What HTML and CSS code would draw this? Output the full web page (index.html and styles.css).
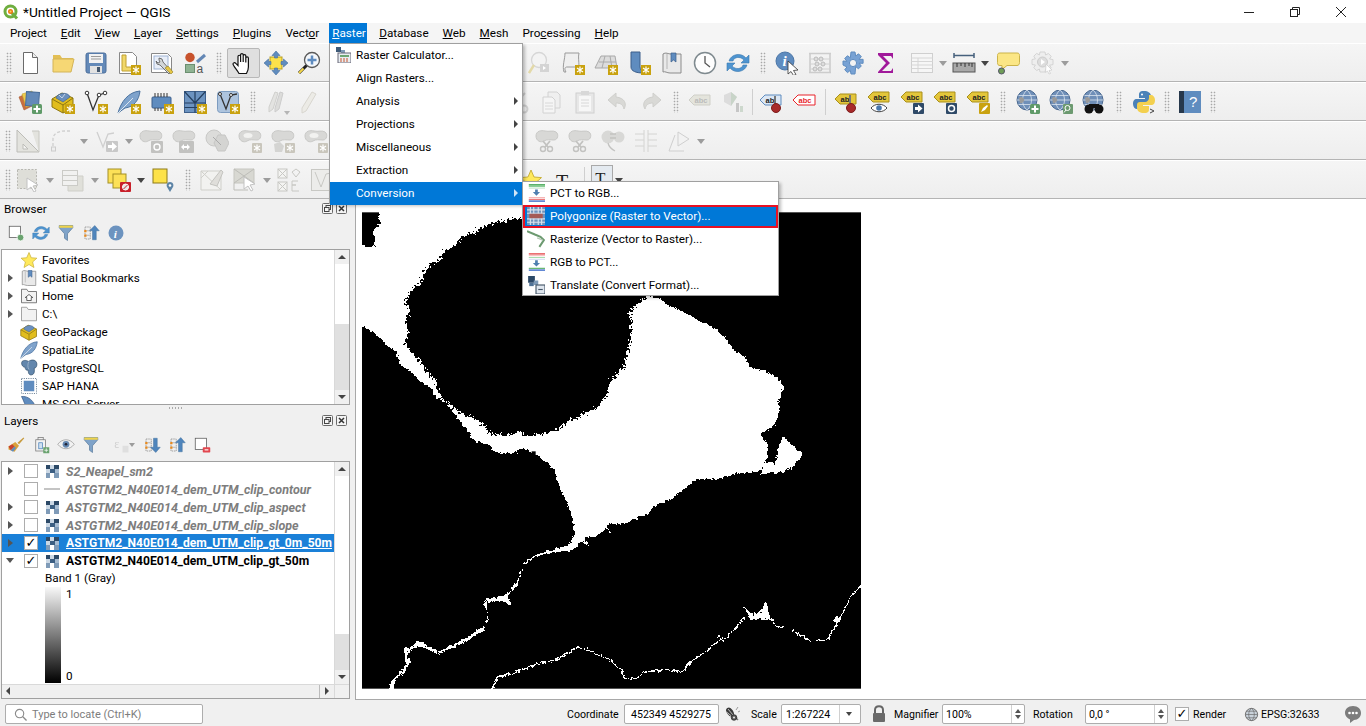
FILE: index.html
```html
<!DOCTYPE html>
<html lang="en">
<head>
<meta charset="utf-8">
<title>*Untitled Project — QGIS</title>
<link rel="stylesheet" href="styles.css">
</head>
<body>
<svg class="defs" aria-hidden="true">
  <symbol id="star" viewBox="0 0 24 24"><path d="M12 2l3 7 7.500 .6-5.700 5 1.800 7.400-6.600-4-6.600 4 1.800-7.400-5.700-5 7.500-.6z" fill="#ffe95c" stroke="#c9b23c"/></symbol>
  <g id="bd"><rect x="14" y="14" width="10" height="10" fill="#c9a20f"/><path d="M19 15.500v7M16 17l6 4M22 17l-6 4" stroke="#fff" stroke-width="1.200"/></g>
  <g id="bg"><rect x="14" y="14" width="10" height="10" rx="1" fill="#c9c6bc"/><path d="M19 15.500v7M16 17l6 4M22 17l-6 4" stroke="#fff" stroke-width="1.200"/></g>
  <g id="plus"><rect x="14" y="14" width="10" height="10" rx="1.500" fill="#5f9a68"/><path d="M19 15.500v7M15.500 19h7" stroke="#fff" stroke-width="2"/></g>
  <symbol id="new" viewBox="0 0 24 24"><path d="M5.500 1.500h9l5 5v16h-14z" fill="#fff" stroke="#6a6a6a"/><path d="M14.500 1.500v5h5" fill="#eee" stroke="#6a6a6a"/></symbol>
  <symbol id="open" viewBox="0 0 24 24"><path d="M2 4h7l2 3h11v3H2z" fill="#e3bf55"/><path d="M2 21V8h21l-3 13z" fill="#f6d774" stroke="#d3b458"/></symbol>
  <symbol id="save" viewBox="0 0 24 24"><rect x="2" y="2" width="20" height="20" rx="2" fill="#6389b8" stroke="#4c6f9b"/><rect x="5" y="3" width="14" height="9" fill="#f2f2f2"/><path d="M7 5.500h10M7 8h10" stroke="#9a9a9a"/><rect x="6" y="15" width="12" height="7" fill="#e2e2e2"/><rect x="13" y="16" width="3" height="5" fill="#45586e"/></symbol>
  <symbol id="saveas" viewBox="0 0 24 24"><path d="M2.500 1.500h13l4 4v17h-17z" fill="#fff" stroke="#888"/><path d="M5 4h4v12h9v4H5z" fill="#f1d86a" stroke="#c0a030"/><use href="#bd"/></symbol>
  <symbol id="props" viewBox="0 0 24 24"><path d="M1.500 2.500h16l4 4v15h-20z" fill="#fff" stroke="#888"/><rect x="4" y="5" width="14" height="13" fill="#e8eef8" stroke="#9fb3d3"/><path d="M9 7l3 1 1 3 8 9-2 3-9-9-3-1-1-3 2 2 2-1-1-2z" fill="#d2d6d8" stroke="#555" stroke-width=".8"/><path d="M15 17l6 6 2-2-5-6z" fill="#e6c746" stroke="#8f7a20" stroke-width=".6"/></symbol>
  <symbol id="pan" viewBox="0 0 24 24"><path d="M8 22.500C6 19 2 14.500 2 13c0-1.400 1.700-1.800 2.800-.6L7 14.500V5.500c0-1.700 2.600-1.700 2.600 0V11 3.800c0-1.700 2.600-1.700 2.600 0V11 4.800c0-1.700 2.600-1.700 2.600 0V11.500 7.200c0-1.700 2.600-1.700 2.600 0V16c0 3-1 4.500-2 6.500z" fill="#fff" stroke="#111" stroke-width="1.200"/></symbol>
  <symbol id="pansel" viewBox="0 0 24 24"><rect x="6" y="6" width="12" height="12" fill="#fde24a" stroke="#b69d22"/><path d="M12 0l4 4.500h-2.500V7h-3V4.500H8zM12 24l4-4.500h-2.500V17h-3v2.500H8zM0 12l4.500-4v2.500H7v3H4.500V16zM24 12l-4.500-4v2.500H17v3h2.500V16z" fill="#5f8cbf" stroke="#476f9d" stroke-width=".6"/></symbol>
  <symbol id="zoomin" viewBox="0 0 24 24"><circle cx="15" cy="9" r="7.500" fill="#f4f7fb" stroke="#5a5a5a" stroke-width="1.300"/><path d="M15 4.500v9M10.500 9h9" stroke="#5f8cbf" stroke-width="2.500"/><path d="M9.500 14.500L2 22" stroke="#222" stroke-width="3"/><path d="M6.500 17.500L2 22" stroke="#f4d64a" stroke-width="2.200"/></symbol>
  <symbol id="zoomlast" viewBox="0 0 24 24"><circle cx="11" cy="9" r="7.500" fill="#f3f3f3" stroke="#d6d6d6" stroke-width="1.300"/><path d="M6 14l-5 8" stroke="#e3d9a8" stroke-width="2.500"/><path d="M12 13h9v8h-9z" fill="#d4d4d4"/><path d="M15 15l3 2-3 2z" fill="#fff"/></symbol>
  <symbol id="newmap" viewBox="0 0 24 24"><path d="M4 2h14c-1 4 0 8 0 14H6c-2 0-3 2-1 5H3c-2-6 1-13 1-19z" fill="#efefef" stroke="#9a9a9a"/><use href="#bd"/></symbol>
  <symbol id="mapth" viewBox="0 0 24 24"><path d="M7 5h14l2 12H1z" fill="#dcdcdc" stroke="#a8a8a8"/><path d="M5 11h17M11 5l-3 12M16 5l2 12" stroke="#aaa"/><use href="#bd"/></symbol>
  <symbol id="bmnew" viewBox="0 0 24 24"><path d="M4 1h9v15c0 2 2 4 3 6-7 0-12-2-12-6z" fill="#5f8cbf" stroke="#3d5f8b"/><use href="#bd"/></symbol>
  <symbol id="bmk" viewBox="0 0 24 24"><path d="M3 3c3-2 5 0 8 0h10v19H10c-3 0-5-2-7-1z" fill="#e9e9e9" stroke="#8b8b8b"/><path d="M7 3v15" stroke="#b5b5b5"/><path d="M11 2h5v9l-2.500-2-2.500 2z" fill="#5f8cbf" stroke="#3d5f8b" stroke-width=".7"/></symbol>
  <symbol id="clock" viewBox="0 0 24 24"><circle cx="12" cy="12" r="10.500" fill="#fdfdfd" stroke="#7f8a8f" stroke-width="1.500"/><path d="M12 5v7l5 4" fill="none" stroke="#555" stroke-width="1.300"/></symbol>
  <symbol id="refresh" viewBox="0 0 24 24"><path d="M3 10C5 3 15 1 20 7l3-3v8h-8l3-3C14 5 8 6 7 10z" fill="#4e94d0" stroke="#3a78ae" stroke-width=".6"/><path d="M21 14C19 21 9 23 4 17l-3 3v-8h8l-3 3c4 4 10 3 11-1z" fill="#4e94d0" stroke="#3a78ae" stroke-width=".6"/></symbol>
  <symbol id="abacus" viewBox="0 0 24 24"><path d="M2 2v20M22 2v20M1 2.500h22M1 21.500h22" stroke="#ccc" stroke-width="1.600" fill="none"/><path d="M2 8h20M2 13h20M2 18h20" stroke="#d2d2d2"/><circle cx="8" cy="8" r="2" fill="#ddd" stroke="#bbb"/><circle cx="13" cy="8" r="2" fill="#ddd" stroke="#bbb"/><circle cx="9" cy="13" r="2" fill="#ddd" stroke="#bbb"/><circle cx="15" cy="13" r="2" fill="#ddd" stroke="#bbb"/><circle cx="7" cy="18" r="2" fill="#ddd" stroke="#bbb"/><circle cx="12" cy="18" r="2" fill="#ddd" stroke="#bbb"/></symbol>
  <symbol id="gear" viewBox="0 0 24 24"><path d="M10 1h4l.7 4 2.800-2.200 2.800 2.800-2.200 2.800 4-.1v4l-4-.1 2.200 2.800-2.800 2.800-2.800-2.200L14 23h-4l-.7-3.600-2.800 2.200-2.800-2.800 2.200-2.800L2 14v-4l3.900.3L3.700 7.500l2.800-2.800 2.800 2.200z" fill="#78a2d4" stroke="#5f8cbf"/><circle cx="12" cy="12" r="3.600" fill="#f3f3f3" stroke="#5f8cbf"/></symbol>
  <symbol id="sigma" viewBox="0 0 24 24"><path d="M4 2h15v6l-2-3H9l7 7-8 8h9l2-3v5H4v-1l8-9-8-8z" fill="#a0199a"/></symbol>
  <symbol id="table" viewBox="0 0 24 24"><rect x="1.500" y="2.500" width="21" height="19" fill="#f6f6f6" stroke="#cfcfcf"/><path d="M1.500 7h21M1.500 10.500h21M1.500 14h21M1.500 17.500h21M8 7v14" stroke="#d6d6d6"/></symbol>
  <symbol id="ruler" viewBox="0 0 24 24"><path d="M2 4.500h20M2 2v5M22 2v5" stroke="#46607c" stroke-width="1.500" fill="none"/><rect x="1" y="12" width="22" height="9" fill="#a9a9a9" stroke="#555"/><path d="M5 12v4M9 12v3M13 12v4M17 12v3M20 12v4" stroke="#333"/></symbol>
  <symbol id="bubble" viewBox="0 0 24 24"><path d="M4 2h17c2 0 2.500 1 2.500 2.500v7c0 2-1 3-2.500 3H11l-5 4v-4H4c-2 0-2.500-1-2.500-3v-7C1.500 3 2 2 4 2z" fill="#fbe685" stroke="#cbb34a"/><circle cx="5.500" cy="20" r="3" fill="#6f9d58" stroke="#556"/></symbol>
  <symbol id="run" viewBox="0 0 24 24"><path d="M9 1h5l.6 3 2.800-1.500 2.800 2.800-1.600 2.700 3.400.6v5l-3.400.6 1.600 2.700-2.800 2.800-2.800-1.500L14 21H9l-.6-3-2.800 1.500-2.800-2.800 1.600-2.700L1 13.500v-5l3.400-.6-1.600-2.700 2.800-2.800 2.800 1.500z" fill="#eee" stroke="#d4d4d4"/><circle cx="11.500" cy="11" r="5" fill="#ddd" stroke="#ccc"/><path d="M10 8l4 3-4 3z" fill="#fff"/><path d="M15 13l6 6-3 .5 1.500 3-1.500.5-1.500-3-2 1.500z" fill="#fff" stroke="#ccc" stroke-width=".7"/></symbol>
  <symbol id="addlayer" viewBox="0 0 24 24"><path d="M1 7l9-4 6 12-10 5z" fill="#c96f3f" stroke="#a8572d" stroke-width=".6"/><path d="M4 4l10-3 4 13-10 3z" fill="#f0cc4c" stroke="#c5a433" stroke-width=".6"/><rect x="8" y="2" width="13" height="14" fill="#6389b8" stroke="#486d9b" transform="rotate(4 14 9)"/><use href="#plus"/></symbol>
  <symbol id="gpkg" viewBox="0 0 24 24"><path d="M1 9l10-6 11 5v10l-10 5-11-6z" fill="#e1bd1d" stroke="#8d7612"/><path d="M1 9l11 6 10-7M12 15v8" fill="none" stroke="#8d7612"/><path d="M5 8c1-5 12-7 14-1l-7 5z" fill="#6a8fbd" stroke="#3d5f8b" stroke-width=".6"/><path d="M8 5l3 3 3-4" stroke="#c6d4e6" fill="none"/><use href="#bd"/></symbol>
  <symbol id="vnew" viewBox="0 0 24 24"><path d="M3 3l6 17L15 5l6-2" fill="none" stroke="#333" stroke-width="1.300"/><circle cx="3" cy="3" r="1.800" fill="#fff" stroke="#333"/><circle cx="15" cy="5" r="1.800" fill="#fff" stroke="#333"/><circle cx="21" cy="3" r="1.800" fill="#fff" stroke="#333"/><use href="#bd"/></symbol>
  <symbol id="feather" viewBox="0 0 24 24"><path d="M1 23C4 12 11 2 23 1c-1 9-6 16-15 17z" fill="#7fa3cc" stroke="#4c739f"/><path d="M1 23L16 8" stroke="#dce6f0"/><use href="#bd"/></symbol>
  <symbol id="hana" viewBox="0 0 24 24"><rect x="2" y="7" width="19" height="11" rx="1" fill="#5f8cbf" stroke="#3d5f8b"/><path d="M5 3v4M8 3v4M11 3v4M14 3v4M17 3v4M5 18v3M8 18v3M11 18v3" stroke="#333"/><use href="#bd"/></symbol>
  <symbol id="mesh" viewBox="0 0 24 24"><rect x="1.500" y="1.500" width="21" height="21" fill="#6c93c0" stroke="#3d5f8b"/><path d="M1.500 13h21M12 1.500v21M1.500 1.500L12 13M22.500 1.500L12 13M1.500 17.500h21" stroke="#243f5f" stroke-width="1.200" fill="none"/><use href="#bd"/></symbol>
  <symbol id="vtemp" viewBox="0 0 24 24"><rect x="1.500" y="1.500" width="21" height="21" rx="3" fill="#adc4de" stroke="#7d9cc0"/><path d="M4 4l6 15 5-14 6-1" fill="none" stroke="#333" stroke-width="1.300"/><circle cx="4" cy="4" r="1.500" fill="#fff" stroke="#333"/><circle cx="15" cy="5" r="1.500" fill="#fff" stroke="#333"/><use href="#bd"/></symbol>
  <symbol id="pens" viewBox="0 0 24 24"><path d="M3 17L9 2l3 1-5 16-4 3z" fill="#e3e3e1" stroke="#d0d0cd"/><path d="M9 18l5-16 3 1-4 16-4 3z" fill="#dcdcda" stroke="#ccc"/></symbol>
  <symbol id="pen" viewBox="0 0 24 24"><path d="M6 18L16 2l4 2-10 17-4 2z" fill="#ecebe6" stroke="#d8d6cf"/></symbol>
  <symbol id="scis" viewBox="0 0 24 24"><path d="M5 3l8 11M18 3L8 14" stroke="#cfcfcf" stroke-width="2"/><circle cx="6" cy="19" r="3.500" fill="none" stroke="#cfcfcf" stroke-width="2"/><circle cx="17" cy="19" r="3.500" fill="none" stroke="#cfcfcf" stroke-width="2"/></symbol>
  <symbol id="copy" viewBox="0 0 24 24"><path d="M8 2h9l3 3v13H8z" fill="#efefef" stroke="#d2d2d2"/><path d="M3 7h9l3 3v13H3z" fill="#f5f5f5" stroke="#d2d2d2"/><path d="M5 13h8M5 16h8M5 19h8" stroke="#d8d8d8"/></symbol>
  <symbol id="paste" viewBox="0 0 24 24"><rect x="3" y="3" width="18" height="20" fill="#e7e7e7" stroke="#d0d0d0"/><rect x="8" y="1" width="8" height="4" fill="#d8d8d8"/><rect x="6" y="6" width="12" height="15" fill="#f7f7f7"/><path d="M8 10h8M8 13h8M8 16h8" stroke="#d8d8d8"/></symbol>
  <symbol id="undo" viewBox="0 0 24 24"><path d="M10 3L2 10l8 7v-4c5 0 7 2 8 6 3-5 1-11-8-12z" fill="#d9d9d6" stroke="#cfcfcc"/></symbol>
  <symbol id="redo" viewBox="0 0 24 24"><path d="M14 3l8 7-8 7v-4c-5 0-7 2-8 6-3-5-1-11 8-12z" fill="#d9d9d6" stroke="#cfcfcc"/></symbol>
  <symbol id="labbar" viewBox="0 0 24 24"><path d="M3 5l7-3 6 5-6 9-7-4z" fill="#dcdcdc"/><path d="M10 2l6 5-6 9z" fill="#c8d4c8"/><rect x="15" y="13" width="3" height="9" fill="#c6c6c6"/><rect x="19" y="16" width="3" height="6" fill="#cdd8cd"/></symbol>
  <g id="globe"><circle cx="11" cy="10" r="10" fill="#6f8fb8" stroke="#4c6a91"/><path d="M1 10h20M2.500 5.500h17M2.500 14.500h17M11 0c-6 5-6 15 0 20M11 0c6 5 6 15 0 20" stroke="#dce5ef" fill="none" stroke-width=".8"/><path d="M3 8c2-2 4-1 5 1s-2 5-4 4z" fill="#9a9a9a"/></g>
  <symbol id="gadd" viewBox="0 0 24 24"><use href="#globe"/><use href="#plus"/></symbol>
  <symbol id="gfind" viewBox="0 0 24 24"><use href="#globe"/><rect x="14" y="14" width="10" height="10" rx="1" fill="#6c9a70"/><circle cx="18.500" cy="18" r="2.500" fill="none" stroke="#fff"/><path d="M17 20l-2 2.500" stroke="#fff"/></symbol>
  <symbol id="gbin" viewBox="0 0 24 24"><use href="#globe"/><circle cx="7" cy="19" r="4.500" fill="#111"/><circle cx="17" cy="19" r="4.500" fill="#111"/><path d="M7 14h10v4H7z" fill="#111"/></symbol>
  <symbol id="py" viewBox="0 0 24 24"><path d="M12 1c-5 0-5 2-5 5v2h6v1H5c-3 0-4 2-4 5s2 5 4 5h2v-3c0-2 2-4 4-4h5c2 0 3-1 3-3V6c0-3-3-5-7-5z" fill="#4b82b8"/><path d="M12 23c5 0 5-2 5-5v-2h-6v-1h8c3 0 4-2 4-5s-2-5-4-5h-2v3c0 2-2 4-4 4H8c-2 0-3 1-3 3v3c0 3 3 5 7 5z" fill="#f3d04f"/><circle cx="10" cy="4.500" r="1" fill="#fff"/><path d="M18 19l4 2-4 2" fill="none" stroke="#444"/></symbol>
  <symbol id="ruleg" viewBox="0 0 24 24"><path d="M1 1v22h22z" fill="#e3e3de" stroke="#bdbdb8"/><path d="M7 15v5h5z" fill="#f4f4f2" stroke="#bdbdb8"/><path d="M16 2h7v21" fill="#e3e3de" stroke="#c8c8c2"/></symbol>
  <symbol id="curve" viewBox="0 0 24 24"><path d="M3 22V10C3 5 8 2 15 2h6" fill="none" stroke="#cfcfcf" stroke-width="1.300" stroke-dasharray="3 2"/><rect x="1.500" y="18" width="4" height="4" fill="#eee" stroke="#ccc"/></symbol>
  <symbol id="vmove" viewBox="0 0 24 24"><path d="M2 3l6 15 5-13 6-1" fill="none" stroke="#cfcfcf" stroke-width="1.300"/><rect x="11" y="12" width="12" height="11" rx="1" fill="#c8c8c8"/><path d="M13 16h4v-3l5 4.500-5 4.500v-3h-4z" fill="#fff"/></symbol>
  <g id="blob"><path d="M1 7C1 2 6 1 10 2c4 1 8-1 11 1s2 8-2 8-7-1-10 1-8 0-8-5z" fill="#d8d8d6" stroke="#c9c9c7"/></g>
  <symbol id="brot" viewBox="0 0 24 24"><use href="#blob"/><rect x="12" y="12" width="12" height="12" rx="1" fill="#c2c2c0"/><circle cx="18" cy="18" r="3" fill="none" stroke="#fff" stroke-width="1.400"/></symbol>
  <symbol id="bsize" viewBox="0 0 24 24"><use href="#blob"/><rect x="7" y="12" width="15" height="12" rx="1" fill="#c2c2c0"/><path d="M9 18l3-3v2h3v-2l3 3-3 3v-2h-3v2z" fill="#fff"/></symbol>
  <symbol id="bhex" viewBox="0 0 24 24"><circle cx="9" cy="9" r="8" fill="#dcdcda" stroke="#c9c9c7"/><path d="M13 6h7l4 8-4 8h-7l-4-8z" fill="#d4d4d2" stroke="#c6c6c4"/><path d="M8 8l8 8" stroke="#aaa"/></symbol>
  <symbol id="brng" viewBox="0 0 24 24"><use href="#blob"/><ellipse cx="10" cy="6.500" rx="4.500" ry="2.500" fill="#f2f2f0"/><use href="#bg"/></symbol>
  <symbol id="bpart" viewBox="0 0 24 24"><use href="#blob"/><path d="M3 15l6-2 4 4-2 6H4z" fill="#d4d4d2"/><use href="#bg"/></symbol>
  <symbol id="bscis" viewBox="0 0 24 24"><use href="#blob"/><path d="M8 12l5 6M15 12l-5 6" stroke="#c2c2c0" stroke-width="1.800"/><circle cx="8" cy="20" r="2.500" fill="none" stroke="#c2c2c0" stroke-width="1.400"/><circle cx="15" cy="20" r="2.500" fill="none" stroke="#c2c2c0" stroke-width="1.400"/></symbol>
  <symbol id="bmerge" viewBox="0 0 24 24"><circle cx="7" cy="8" r="6.500" fill="#d8d8d6"/><circle cx="18" cy="8" r="5.500" fill="#d8d8d6"/><path d="M9 5h6M9 9h6M7 14c1 4 3 6 7 8" stroke="#c2c2c0" fill="none" stroke-width="1.300"/></symbol>
  <symbol id="offs" viewBox="0 0 24 24"><path d="M1 5h9M14 5h9M1 11h9M14 11h9M1 17h9M14 17h9M10 1v22M14 1v22" stroke="#d4d4d2"/></symbol>
  <symbol id="rotp" viewBox="0 0 24 24"><path d="M11 3l11 7-11 7zM8 6L2 22h15" fill="#f2f2f2" stroke="#cfcfcf"/></symbol>
  <symbol id="sel" viewBox="0 0 24 24"><rect x="1.500" y="1.500" width="19" height="19" fill="#deded8" stroke="#b8b8b2" stroke-dasharray="2 1.500"/><path d="M11 10l11 7-5 1 3 5-2 1-3-5-4 3z" fill="#fff" stroke="#c2c2c2"/></symbol>
  <symbol id="attrs" viewBox="0 0 24 24"><path d="M17 8h5v15H7v-5" fill="#e0e0da" stroke="#cfcfc9"/><rect x="1.500" y="2.500" width="15" height="15" fill="#f1f1f0" stroke="#cbcbc7"/><path d="M1.500 7.500h15M1.500 12.500h15" stroke="#cbcbc7"/></symbol>
  <symbol id="desel" viewBox="0 0 24 24"><rect x="1" y="1" width="13" height="14" fill="#fce157" stroke="#a39026"/><rect x="6" y="6" width="13" height="14" fill="#fce157" stroke="#a39026"/><rect x="13" y="14" width="11" height="10" rx="1" fill="#c8202a"/><circle cx="18.500" cy="19" r="3" fill="#e6e6e6" stroke="#fff"/><path d="M16.500 21l4-4" stroke="#c8202a"/></symbol>
  <symbol id="selpin" viewBox="0 0 24 24"><rect x="1" y="1" width="14" height="14" fill="#fde24a" stroke="#8d7a18"/><path d="M18 14c-3 0-4 3-3 5l3 5 3-5c1-2 0-5-3-5z" fill="#5d84a6"/><circle cx="18" cy="17.500" r="1.300" fill="#fff"/></symbol>
  <symbol id="e1" viewBox="0 0 24 24"><path d="M1 3h20v19H1z" fill="#f2f2f0" stroke="#cfcfca"/><path d="M1 3l20 19M8 3L1 10" stroke="#cfcfca"/><path d="M17 18L23 4l-2-2L10 16z" fill="#dfdeda" stroke="#c4c4c0"/></symbol>
  <symbol id="e2" viewBox="0 0 24 24"><path d="M1 1h20v14H1z" fill="#d8d8d2" stroke="#c6c6c0"/><path d="M1 1l20 14M21 1L1 15M1 15v7h14" stroke="#bdbdb8" fill="none"/><path d="M11 9l11 7-5 1 3 5-2 1-3-5-4 3z" fill="#fff" stroke="#c2c2c2"/></symbol>
  <symbol id="e3" viewBox="0 0 24 24"><rect x="1" y="1" width="9" height="9" fill="#f4f4f2" stroke="#c8c8c4"/><rect x="1" y="14" width="9" height="9" fill="#f4f4f2" stroke="#c8c8c4"/><path d="M1 1l9 9M10 1l-9 9M1 14l9 9M10 14l-9 9M15 4l4-3 4 3-4 5zM21 13h-6v4h4-4v6h7" fill="none" stroke="#c8c8c4"/></symbol>
  <symbol id="e4" viewBox="0 0 24 24"><rect x="1.500" y="1.500" width="21" height="21" fill="#ececea" stroke="#c8c8c4"/><path d="M5 4l6 15 5-13 5-1" fill="none" stroke="#c8c8c4"/></symbol>
  <symbol id="addnew" viewBox="0 0 24 24"><rect x="3" y="3" width="15" height="15" fill="#fff" stroke="#555"/><circle cx="18" cy="18" r="4.500" fill="#6aa36f" stroke="#fff"/></symbol>
  <symbol id="funnel" viewBox="0 0 24 24"><path d="M3 2h18v3l-7 8v9l-4-3v-6L3 5z" fill="#7fa3c9" stroke="#5f7f9f"/><rect x="3" y="2" width="18" height="3" fill="#f0d34a"/></symbol>
  <symbol id="collup" viewBox="0 0 24 24"><path d="M4 4h7v16H4zM4 9h7M4 15h7" fill="none" stroke="#8a8a8a" stroke-dasharray="2 1"/><rect x="3" y="8" width="3" height="3" fill="#e98a1e"/><rect x="3" y="14" width="3" height="3" fill="#e98a1e"/><path d="M17 2l6 7h-4v12h-5V9h-4z" fill="#4f85bc" stroke="#3d6b99" stroke-width=".6"/></symbol>
  <symbol id="colldn" viewBox="0 0 24 24"><path d="M4 4h7v16H4zM4 9h7M4 15h7" fill="none" stroke="#8a8a8a" stroke-dasharray="2 1"/><rect x="3" y="8" width="3" height="3" fill="#e98a1e"/><rect x="3" y="14" width="3" height="3" fill="#e98a1e"/><path d="M17 22l6-7h-4V3h-5v12h-4z" fill="#4f85bc" stroke="#3d6b99" stroke-width=".6"/></symbol>
  <symbol id="brush" viewBox="0 0 24 24"><path d="M14 9l8-7 1 1-7 8z" fill="#c79a3c"/><path d="M2 14l9-6 5 5-6 8-8-3z" fill="#d9a03a"/><path d="M2 14l5-3 3 3-5 5z" fill="#c8422d"/><path d="M5 19l5-5 2 2-4 5z" fill="#5f8cbf"/></symbol>
  <symbol id="addgrp" viewBox="0 0 24 24"><rect x="8" y="2" width="7" height="4" fill="none" stroke="#777"/><rect x="5" y="5" width="13" height="15" fill="#f2f2f2" stroke="#777"/><rect x="9" y="9" width="5" height="8" fill="#cfe0f0" stroke="#4f85bc"/><rect x="15" y="15" width="8" height="8" fill="#6aa36f"/><path d="M19 16.500v5M16.500 19h5" stroke="#fff"/></symbol>
  <symbol id="eye" viewBox="0 0 24 24"><path d="M1 11c6-8 16-8 22 0-6 8-16 8-22 0z" fill="#f2f2f2" stroke="#999"/><circle cx="12" cy="11" r="4.500" fill="#6387b0"/><circle cx="12" cy="11" r="1.800" fill="#223"/></symbol>
  <symbol id="rem" viewBox="0 0 24 24"><rect x="3" y="3" width="15" height="15" fill="#fff" stroke="#555"/><rect x="13" y="15" width="10" height="7" rx="1" fill="#e2474f"/><path d="M15.500 18.500h5" stroke="#fff" stroke-width="1.500"/></symbol>
  <symbol id="folder" viewBox="0 0 24 24"><path d="M2 21V3h7l2 3h11v15z" fill="#f2f2f2" stroke="#8a8a8a"/></symbol>
  <symbol id="home" viewBox="0 0 24 24"><path d="M2 21V3h7l2 3h11v15z" fill="#f2f2f2" stroke="#555"/><path d="M7 14l5-4 5 4h-2v4H9v-4z" fill="#fff" stroke="#333"/></symbol>
  <symbol id="pg" viewBox="0 0 24 24"><path d="M3 3c5-3 8 1 9 0s6-3 9 0 1 10-2 9c0 3 1 8-3 9s-5-2-5-6c-4 0-4-2-4-4-4 0-6-5-4-8z" fill="#6387ad" stroke="#33526f"/><path d="M12 3c-2 4-2 8 0 11" stroke="#a8bdd1" fill="none"/></symbol>
  <symbol id="hanabox" viewBox="0 0 24 24"><rect x="2" y="2" width="20" height="20" fill="none" stroke="#47607b" stroke-dasharray="1.500 1.500"/><rect x="5" y="5" width="14" height="14" fill="#5f8cbf"/></symbol>
  <symbol id="mss" viewBox="0 0 24 24"><path d="M2 2c8-1 18 5 20 20H8C8 14 5 8 2 2z" fill="#5f8cbf" stroke="#3d5f8b"/></symbol>
  <symbol id="rst" viewBox="0 0 13 13"><rect width="13" height="13" fill="#fff"/><rect width="4" height="4" fill="#2c4967"/><rect x="8" width="5" height="4" fill="#2c4967"/><rect x="4" y="4" width="5" height="4" fill="#3c5f83"/><rect y="8" width="4" height="5" fill="#7f9bb8"/><rect x="8" y="8" width="5" height="5" fill="#7f9bb8"/><rect x="9" y="4" width="4" height="4" fill="#a7bcd2"/><rect y="4" width="4" height="4" fill="#cbd8e5"/><rect x="4" width="4" height="4" fill="#cbd8e5"/></symbol>
  <symbol id="rcalc" viewBox="0 0 16 16"><rect x="1" y="0" width="5" height="5" fill="#3f5b78"/><rect x="6" y="3" width="4" height="3" fill="#7f9bb8"/><rect x="3" y="6" width="13" height="10" fill="#e9eef3" stroke="#667"/><rect x="5" y="8" width="9" height="2" fill="#6fa775"/><path d="M5 12h2M8 12h2M11 12h2M5 14h2M8 14h2M11 14h2" stroke="#c8552d"/></symbol>
  <symbol id="pct" viewBox="0 0 20 20"><path d="M2 1h18" stroke="#2d9d3f" stroke-width="1.500"/><path d="M2 3h18" stroke="#5fc06f"/><path d="M2 5h18" stroke="#d5ead8"/><path d="M2 15h18" stroke="#f4b0b0"/><path d="M2 17h18" stroke="#e5464a"/><path d="M2 19h18" stroke="#3465c8" stroke-width="1.500"/><path d="M9 6h3v3h2.500l-4 4-4-4H9z" fill="#4f7fb0"/></symbol>
  <symbol id="rgbp" viewBox="0 0 20 20"><path d="M2 1h18" stroke="#e5464a" stroke-width="1.500"/><path d="M2 3h18" stroke="#f4b0b0"/><path d="M2 5h18" stroke="#9ed9a6"/><path d="M2 7h18" stroke="#cfd8f2"/><path d="M2 19h18" stroke="#3465c8" stroke-width="1.500"/><path d="M2 17h18" stroke="#2d9d3f"/><path d="M9 8h3v3h2.500l-4 4-4-4H9z" fill="#4f7fb0"/></symbol>
  <symbol id="poly" viewBox="0 0 16 16"><rect width="16" height="16" fill="#6f92bb"/><path d="M0 2.500h16M0 5.500h16M0 10.500h16M0 13.500h16M3 0v16M6 0v16M10 0v16M13 0v16" stroke="#d8e2ee"/><rect x="2" y="6" width="12" height="4" fill="#a55a55"/></symbol>
  <symbol id="rasz" viewBox="0 0 16 16"><path d="M0 1l7 3 5 2 3 3-4 6" fill="none" stroke="#6c9a70" stroke-width="1.800"/><path d="M9 7l5 2" stroke="#b5c9b5"/></symbol>
  <symbol id="trans" viewBox="0 0 16 16"><rect x="1" y="0" width="6" height="6" fill="#2c4967"/><rect x="6" y="4" width="4" height="4" fill="#7f9bb8"/><rect x="2" y="6" width="4" height="3" fill="#4f7296"/><rect x="8" y="8" width="8" height="8" fill="#dfe6ee" stroke="#456"/><path d="M10 12h4" stroke="#456"/></symbol>
  <symbol id="float" viewBox="0 0 11 11"><rect x=".5" y=".5" width="10" height="10" rx="1" fill="#f4f4f4" stroke="#6a6a6a"/><rect x="4" y="2.500" width="4.500" height="4" fill="none" stroke="#444"/><rect x="2.500" y="4.500" width="4.500" height="4" fill="#f4f4f4" stroke="#444"/></symbol>
  <symbol id="close" viewBox="0 0 11 11"><rect x=".5" y=".5" width="10" height="10" rx="1" fill="#f4f4f4" stroke="#6a6a6a"/><path d="M3 3l5 5M8 3l-5 5" stroke="#333" stroke-width="1.500"/></symbol>
  <symbol id="wiz" viewBox="0 0 16 16"><ellipse cx="5" cy="6" rx="3.200" ry="4.800" fill="#3a3a3a" transform="rotate(-35 5 6)"/><path d="M3 3l5 6M1.500 6l5 4" stroke="#ddd" stroke-width=".8"/><path d="M9 10l4 4" stroke="#777" stroke-width="1.400"/><circle cx="9" cy="11.500" r="2.800" fill="#555" stroke="#222" stroke-width=".7"/><circle cx="9" cy="11.500" r="1" fill="#eee"/><path d="M11 4l2-3M13 6l2-1" stroke="#999"/></symbol>
  <symbol id="lock" viewBox="0 0 14 18"><path d="M3 8V5c0-5 8-5 8 0v3" fill="none" stroke="#666" stroke-width="2"/><rect x="1" y="8" width="12" height="9" rx="1" fill="#6a6a6a"/></symbol>
  <symbol id="sglobe" viewBox="0 0 16 16"><circle cx="8" cy="8" r="6.500" fill="#c9d2db" stroke="#666"/><path d="M1.500 8h13M8 1.500c-4 3-4 10 0 13M8 1.500c4 3 4 10 0 13M2.500 4.500h11M2.500 11.500h11" stroke="#666" fill="none" stroke-width=".7"/></symbol>
  <symbol id="msg" viewBox="0 0 18 18"><path d="M9 1c5 0 8 3 8 7s-3 7-7 7l-4 3v-3.500C3 13 1 11 1 8c0-4 3-7 8-7z" fill="#7c7c7c"/><circle cx="5.500" cy="8" r="1.300" fill="#fff"/><circle cx="9" cy="8" r="1.300" fill="#fff"/><circle cx="12.500" cy="8" r="1.300" fill="#fff"/></symbol>
  <symbol id="search" viewBox="0 0 14 14"><circle cx="6" cy="6" r="4.500" fill="none" stroke="#8a8a8a" stroke-width="1.200"/><path d="M9.500 9.500l4 4" stroke="#8a8a8a" stroke-width="1.400"/></symbol>
  <symbol id="qgis" viewBox="0 0 16 16"><circle cx="7.500" cy="7.500" r="5.500" fill="#fff" stroke="#6fae3f" stroke-width="3"/><path d="M8 8l6 6.500" stroke="#6fae3f" stroke-width="3"/><circle cx="7.500" cy="7.500" r="2.500" fill="#ee7913"/><circle cx="7.500" cy="7.500" r="1" fill="#f4d25a"/></symbol>
  <symbol id="gpkg2" viewBox="0 0 24 24"><path d="M1 9l10-6 11 5v10l-10 5-11-6z" fill="#e1bd1d" stroke="#8d7612"/><path d="M1 9l11 6 10-7M12 15v8" fill="none" stroke="#8d7612"/><path d="M5 8c1-5 12-7 14-1l-7 5z" fill="#6a8fbd" stroke="#3d5f8b" stroke-width=".6"/></symbol>
  <symbol id="feather2" viewBox="0 0 24 24"><path d="M1 23C4 12 11 2 23 1c-1 9-6 16-15 17z" fill="#7fa3cc" stroke="#4c739f"/><path d="M1 23L16 8" stroke="#dce6f0"/></symbol>
  <filter id="jag" filterUnits="userSpaceOnUse" x="-40" y="-40" width="1600" height="1520" color-interpolation-filters="sRGB"><feTurbulence type="fractalNoise" baseFrequency=".1" numOctaves="2" seed="4"/><feDisplacementMap in="SourceGraphic" scale="16" xChannelSelector="R" yChannelSelector="G"/></filter>
  <filter id="jag2" filterUnits="userSpaceOnUse" x="-40" y="-40" width="1600" height="1520" color-interpolation-filters="sRGB"><feTurbulence type="fractalNoise" baseFrequency=".14" numOctaves="2" seed="9"/><feDisplacementMap in="SourceGraphic" scale="34" xChannelSelector="R" yChannelSelector="G"/></filter>
</svg>

<div class="app">
  <header class="titlebar">
    <svg class="qlogo"><use href="#qgis"/></svg>
    <span class="title">*Untitled Project — QGIS</span>
    <span class="fill"></span>
    <span class="win"><svg viewBox="0 0 10 10" class="wi"><path d="M0 5.500h10" stroke="#222"/></svg></span>
    <span class="win"><svg viewBox="0 0 10 10" class="wi"><path d="M2.500 2.500V.5h7v7h-2" fill="none" stroke="#222"/><rect x=".5" y="2.500" width="7" height="7" fill="none" stroke="#222"/></svg></span>
    <span class="win"><svg viewBox="0 0 10 10" class="wi"><path d="M0 0l10 10M10 0L0 10" stroke="#222"/></svg></span>
  </header>

  <nav class="menubar">
    <span class="mi">Pro<u>j</u>ect</span><span class="mi"><u>E</u>dit</span><span class="mi"><u>V</u>iew</span><span class="mi"><u>L</u>ayer</span><span class="mi"><u>S</u>ettings</span><span class="mi"><u>P</u>lugins</span><span class="mi">Vect<u>o</u>r</span><span class="mi on"><u>R</u>aster</span><span class="mi"><u>D</u>atabase</span><span class="mi"><u>W</u>eb</span><span class="mi"><u>M</u>esh</span><span class="mi">Pro<u>c</u>essing</span><span class="mi"><u>H</u>elp</span>
  </nav>

  <div class="tb t1">
    <i class="hd"></i>
    <span class="b"><svg class="ic"><use href="#new"/></svg></span>
    <span class="b"><svg class="ic"><use href="#open"/></svg></span>
    <span class="b"><svg class="ic"><use href="#save"/></svg></span>
    <span class="b"><svg class="ic"><use href="#saveas"/></svg></span>
    <span class="b"><svg class="ic"><use href="#props"/></svg></span>
    <span class="b"><svg class="ic" viewBox="0 0 24 24"><circle cx="7" cy="6.500" r="4.700" fill="#c8532d"/><path d="M14 11l8-7" stroke="#6387b5" stroke-width="3"/><rect x="2.500" y="13.500" width="9" height="8" fill="#8fb393" stroke="#6b8f70"/><text x="13.500" y="22" class="st">a</text></svg></span>
    <i class="hd h15"></i>
    <span class="b act"><svg class="ic"><use href="#pan"/></svg></span>
    <span class="b"><svg class="ic"><use href="#pansel"/></svg></span>
    <span class="b"><svg class="ic"><use href="#zoomin"/></svg></span>
    <span class="under1"></span>
    <span class="b"><svg class="ic"><use href="#zoomlast"/></svg></span>
    <span class="b"><svg class="ic"><use href="#newmap"/></svg></span>
    <span class="b"><svg class="ic"><use href="#mapth"/></svg></span>
    <span class="b"><svg class="ic"><use href="#bmnew"/></svg></span>
    <span class="b"><svg class="ic"><use href="#bmk"/></svg></span>
    <span class="b"><svg class="ic"><use href="#clock"/></svg></span>
    <span class="b"><svg class="ic"><use href="#refresh"/></svg></span>
    <i class="hd h16"></i>
    <span class="b"><svg class="ic" viewBox="0 0 24 24"><circle cx="10" cy="10" r="9" fill="#5f8cbf" stroke="#4b76a7"/><text x="7.500" y="15" class="it">i</text><path d="M13 10l10 9-4.500.5 2.500 4-2.500 1-2.500-4-3 2.500z" fill="#fff" stroke="#333" stroke-width=".8"/></svg></span>
    <span class="b"><svg class="ic"><use href="#abacus"/></svg></span>
    <span class="b"><svg class="ic"><use href="#gear"/></svg></span>
    <span class="b"><svg class="ic"><use href="#sigma"/></svg></span>
    <span class="gap3"></span>
    <span class="b"><svg class="ic"><use href="#table"/></svg></span><span class="ar lt9"></span>
    <span class="b"><svg class="ic"><use href="#ruler"/></svg></span><span class="ar dk lt9"></span>
    <span class="gap2"></span>
    <span class="b"><svg class="ic"><use href="#bubble"/></svg></span>
    <span class="gap2"></span>
    <span class="b"><svg class="ic"><use href="#run"/></svg></span><span class="ar"></span>
  </div>

  <div class="tb t2">
    <i class="hd"></i>
    <span class="b"><svg class="ic"><use href="#addlayer"/></svg></span>
    <span class="b"><svg class="ic"><use href="#gpkg"/></svg></span>
    <span class="b"><svg class="ic"><use href="#vnew"/></svg></span>
    <span class="b"><svg class="ic"><use href="#feather"/></svg></span>
    <span class="b"><svg class="ic"><use href="#hana"/></svg></span>
    <span class="b"><svg class="ic"><use href="#mesh"/></svg></span>
    <span class="b"><svg class="ic"><use href="#vtemp"/></svg></span>
    <i class="hd h17"></i>
    <span class="b pd"><svg class="ic"><use href="#pens"/></svg></span>
    <span class="b tight"><svg class="ic"><use href="#pen"/></svg></span>
    <span class="under2"></span>
    <span class="b"><svg class="ic"><use href="#scis"/></svg></span>
    <span class="b"><svg class="ic"><use href="#copy"/></svg></span>
    <span class="b"><svg class="ic"><use href="#paste"/></svg></span>
    <span class="b"><svg class="ic"><use href="#undo"/></svg></span>
    <span class="b"><svg class="ic"><use href="#redo"/></svg></span>
    <i class="hd h16"></i>
    <span class="b"><svg class="ic" viewBox="0 0 24 24"><path d="M1 10l5-5h16v10H6z" fill="#e4e4dc" stroke="#cfcfc8"/><text x="6.500" y="13" class="lt gy">abc</text></svg></span>
    <span class="b"><svg class="ic"><use href="#labbar"/></svg></span>
    <i class="sep s5"></i>
    <span class="b"><svg class="ic" viewBox="0 0 24 24"><path d="M1 10l5-5h16v10H6z" fill="#dbe7f5" stroke="#5f8cbf"/><text x="6.500" y="13" class="lt">ab</text><path d="M16 6v8" stroke="#777" stroke-width="2"/><circle cx="17" cy="18" r="4.500" fill="#a82a2a" stroke="#7d1c1c"/></svg></span>
    <span class="b"><svg class="ic" viewBox="0 0 24 24"><path d="M1 10l5-5h17v10H6z" fill="#fff" stroke="#e8232a"/><text x="6.500" y="13" class="lt rd">abc</text></svg></span>
    <i class="sep s9"></i>
    <span class="b"><svg class="ic" viewBox="0 0 24 24"><path d="M1 9l5-5h16v10H6z" fill="#e3c63b" stroke="#a98f1a"/><text x="6.500" y="12" class="lt">ab</text><path d="M16 5v8" stroke="#777" stroke-width="2"/><circle cx="17" cy="18" r="4.500" fill="#a82a2a" stroke="#7d1c1c"/></svg></span>
    <span class="b"><svg class="ic" viewBox="0 0 24 24"><path d="M1 7l5-5h16v10H6z" fill="#e3c63b" stroke="#a98f1a"/><text x="6.500" y="10" class="lt">abc</text><path d="M4 18c4-5 12-5 16 0-4 5-12 5-16 0z" fill="#fff" stroke="#444"/><circle cx="12" cy="18" r="2.800" fill="#4a79ad"/></svg></span>
    <span class="b"><svg class="ic" viewBox="0 0 24 24"><path d="M1 7l5-5h16v10H6z" fill="#e3c63b" stroke="#a98f1a"/><text x="6.500" y="10" class="lt">abc</text><rect x="13" y="13" width="11" height="11" rx="1" fill="#2f4a68"/><path d="M15 17h3v-2.500l4.500 4-4.500 4V20h-3z" fill="#fff"/></svg></span>
    <span class="b"><svg class="ic" viewBox="0 0 24 24"><path d="M1 7l5-5h16v10H6z" fill="#e3c63b" stroke="#a98f1a"/><text x="6.500" y="10" class="lt">abc</text><rect x="13" y="13" width="11" height="11" rx="1" fill="#2f4a68"/><circle cx="18.500" cy="18.500" r="3" fill="none" stroke="#fff" stroke-width="1.500"/></svg></span>
    <span class="b"><svg class="ic" viewBox="0 0 24 24"><path d="M1 7l5-5h16v10H6z" fill="#e3c63b" stroke="#a98f1a"/><text x="6.500" y="10" class="lt">abc</text><rect x="13" y="13" width="11" height="11" rx="1" fill="#c9a20f"/><path d="M15 22l2-4 4-3 1 1-3 4z" fill="#fff"/></svg></span>
    <i class="hd h17"></i>
    <span class="b"><svg class="ic"><use href="#gadd"/></svg></span>
    <span class="b"><svg class="ic"><use href="#gfind"/></svg></span>
    <span class="b"><svg class="ic"><use href="#gbin"/></svg></span>
    <i class="hd h17"></i>
    <span class="b"><svg class="ic"><use href="#py"/></svg></span>
    <i class="hd h13"></i>
    <span class="b"><svg class="ic" viewBox="0 0 24 24"><rect x="1" y="1" width="22" height="22" fill="#5f8cbf"/><rect x="1" y="1" width="5" height="22" fill="#27384c"/><text x="11" y="17" class="hq">?</text></svg></span>
    <i class="hd h13"></i>
  </div>

  <div class="tb t3">
    <i class="hd h7"></i>
    <span class="b"><svg class="ic"><use href="#ruleg"/></svg></span>
    <span class="gap1"></span>
    <span class="b"><svg class="ic"><use href="#curve"/></svg></span><span class="ar lt11"></span>
    <span class="gap1"></span>
    <span class="b"><svg class="ic"><use href="#vmove"/></svg></span><span class="ar lt11"></span>
    <span class="b"><svg class="ic"><use href="#brot"/></svg></span>
    <span class="b"><svg class="ic"><use href="#bsize"/></svg></span>
    <span class="b"><svg class="ic"><use href="#bhex"/></svg></span>
    <span class="b"><svg class="ic"><use href="#brng"/></svg></span>
    <span class="b"><svg class="ic"><use href="#bpart"/></svg></span>
    <span class="b"><svg class="ic"><use href="#brng"/></svg></span>
    <span class="under1"></span>
    <span class="b"><svg class="ic"><use href="#bscis"/></svg></span>
    <span class="b"><svg class="ic"><use href="#bscis"/></svg></span>
    <span class="b"><svg class="ic"><use href="#bmerge"/></svg></span>
    <span class="b"><svg class="ic"><use href="#offs"/></svg></span>
    <span class="b"><svg class="ic"><use href="#rotp"/></svg></span><span class="ar lt11"></span>
  </div>

  <div class="tb t4">
    <i class="hd h7"></i>
    <span class="b"><svg class="ic"><use href="#sel"/></svg></span><span class="ar lt11"></span>
    <span class="gap1"></span>
    <span class="b"><svg class="ic"><use href="#attrs"/></svg></span><span class="ar lt11"></span>
    <span class="gap2"></span>
    <span class="b"><svg class="ic"><use href="#desel"/></svg></span><span class="ar dk lt11"></span>
    <span class="gap1"></span>
    <span class="b"><svg class="ic"><use href="#selpin"/></svg></span>
    <i class="hd h15"></i>
    <span class="b"><svg class="ic"><use href="#e1"/></svg></span>
    <span class="b"><svg class="ic"><use href="#e2"/></svg></span><span class="ar lt11"></span>
    <span class="b"><svg class="ic"><use href="#e3"/></svg></span>
    <span class="b"><svg class="ic"><use href="#e4"/></svg></span>
    <span class="under4"></span>
    <span class="b"><svg class="ic"><use href="#star"/></svg></span>
    <span class="b"><svg class="ic" viewBox="0 0 24 24"><text x="4" y="21" class="tt">T</text></svg></span>
    <i class="sep s7"></i>
    <span class="tbox"><svg class="ic" viewBox="0 0 24 24"><text x="4" y="21" class="tt">T</text></svg></span><span class="ar dk lt11"></span>
  </div>

  <main class="main">
    <aside class="side">
      <section class="dock d1">
        <div class="dh"><span>Browser</span><span class="dbtns"><svg class="dbt"><use href="#float"/></svg><svg class="dbt"><use href="#close"/></svg></span></div>
        <div class="dt">
          <svg class="di"><use href="#addnew"/></svg><svg class="di"><use href="#refresh"/></svg><svg class="di"><use href="#funnel"/></svg><svg class="di"><use href="#collup"/></svg><svg class="di" viewBox="0 0 24 24"><circle cx="12" cy="12" r="10" fill="#6c93bf"/><text x="9" y="18" class="it">i</text></svg>
        </div>
        <div class="tree br">
          <div class="rows">
            <div class="r"><i class="tw"></i><svg class="ri"><use href="#star"/></svg>Favorites</div>
            <div class="r"><i class="tw c"></i><svg class="ri"><use href="#bmk"/></svg>Spatial Bookmarks</div>
            <div class="r"><i class="tw c"></i><svg class="ri"><use href="#home"/></svg>Home</div>
            <div class="r"><i class="tw c"></i><svg class="ri"><use href="#folder"/></svg>C:\</div>
            <div class="r"><i class="tw"></i><svg class="ri"><use href="#gpkg2"/></svg>GeoPackage</div>
            <div class="r"><i class="tw"></i><svg class="ri"><use href="#feather2"/></svg>SpatiaLite</div>
            <div class="r"><i class="tw"></i><svg class="ri"><use href="#pg"/></svg>PostgreSQL</div>
            <div class="r"><i class="tw"></i><svg class="ri"><use href="#hanabox"/></svg>SAP HANA</div>
            <div class="r"><i class="tw"></i><svg class="ri"><use href="#mss"/></svg>MS SQL Server</div>
          </div>
          <div class="vs vs1"><span class="sb up"></span><span class="tk"></span><span class="th"></span><span class="sb dn"></span></div>
        </div>
      </section>
      <div class="split"></div>
      <section class="dock d2">
        <div class="dh"><span>Layers</span><span class="dbtns"><svg class="dbt"><use href="#float"/></svg><svg class="dbt"><use href="#close"/></svg></span></div>
        <div class="dt">
          <svg class="di"><use href="#brush"/></svg><svg class="di"><use href="#addgrp"/></svg><svg class="di"><use href="#eye"/></svg><svg class="di"><use href="#funnel"/></svg><svg class="di eps1" viewBox="0 0 24 24"><text x="3" y="16" class="eps">ε</text><path d="M14 13h8v9h-8z" fill="#dedede"/></svg><i class="ar small"></i><svg class="di"><use href="#colldn"/></svg><svg class="di"><use href="#collup"/></svg><svg class="di"><use href="#rem"/></svg>
        </div>
        <div class="tree lay">
          <div class="lmain">
            <div class="rows">
              <div class="r l off"><i class="tw c"></i><i class="cb"></i><svg class="rs"><use href="#rst"/></svg><span class="nm">S2_Neapel_sm2</span></div>
              <div class="r l off"><i class="tw"></i><i class="cb"></i><i class="dash"></i><span class="nm">ASTGTM2_N40E014_dem_UTM_clip_contour</span></div>
              <div class="r l off"><i class="tw c"></i><i class="cb"></i><svg class="rs"><use href="#rst"/></svg><span class="nm">ASTGTM2_N40E014_dem_UTM_clip_aspect</span></div>
              <div class="r l off"><i class="tw c"></i><i class="cb"></i><svg class="rs"><use href="#rst"/></svg><span class="nm">ASTGTM2_N40E014_dem_UTM_clip_slope</span></div>
              <div class="r l sel"><i class="tw c"></i><i class="cb ck">✓</i><svg class="rs"><use href="#rst"/></svg><span class="nm">ASTGTM2_N40E014_dem_UTM_clip_gt_0m_50m</span></div>
              <div class="r l vis"><i class="tw o"></i><i class="cb ck">✓</i><svg class="rs"><use href="#rst"/></svg><span class="nm">ASTGTM2_N40E014_dem_UTM_clip_gt_50m</span></div>
              <div class="band">Band 1 (Gray)</div>
              <div class="ramp"><i class="grad"></i><span class="lbs"><span>1</span><span>0</span></span></div>
            </div>
            <div class="hs"><span class="hb lf"></span><span class="hm"></span><span class="hb rt"></span></div>
          </div>
          <div class="vs vs2"><span class="sb up"></span><span class="tk"></span><span class="th"></span><span class="sb dn"></span><span class="cn"></span></div>
        </div>
      </section>
    </aside>
    <section class="canvas">
      <svg class="raster" viewBox="21 21 1497 1429" role="img" aria-label="Raster map">
        <rect x="21" y="21" width="1497" height="1429" fill="#000"/>
        <g filter="url(#jag)" shape-rendering="crispEdges">
          <polygon fill="#fff" points="-30,335 21,362 60,385 95,420 125,440 135,478 170,500 190,525 225,545 245,575 280,600 310,640 340,680 355,705 400,718 425,742 470,745 505,730 525,740 545,750 575,770 600,800 620,860 640,900 655,950 660,985 640,1020 600,1030 550,1045 510,1070 497,1100 485,1130 465,1155 440,1175 395,1180 385,1195 400,1225 390,1260 360,1280 330,1300 290,1320 250,1340 190,1305 175,1325 145,1330 155,1375 125,1415 108,1425 105,1470 115,1470 120,1425 150,1400 165,1370 155,1345 190,1320 245,1345 300,1325 340,1305 385,1275 400,1240 395,1190 440,1185 470,1200 455,1170 470,1158 490,1130 500,1090 515,1070 560,1048 610,1040 650,1035 690,1000 740,985 760,955 810,955 880,925 905,900 960,875 990,850 1020,825 1090,820 1150,805 1210,800 1225,785 1240,745 1235,715 1215,685 1260,660 1272,620 1270,590 1285,545 1270,520 1240,500 1185,485 1170,455 1130,430 1110,395 1080,370 1040,350 1000,325 940,300 915,280 880,270 760,-30 85,-30 70,40 75,55 55,75 60,105 62,122 -30,120"/>
          <polygon fill="#fff" points="1285,690 1310,720 1345,745 1310,790 1280,785 1260,775 1270,730"/>
          <polygon fill="#fff" points="1225,775 1245,770 1300,790 1290,800 1220,805"/>
          <path fill="#fff" d="M1165 1200l25 25 30-5 15-40 8 50 15 20-30-10-40 5zM1440 1230l15 10-8 20-10-10z"/>
          <g fill="none" stroke="#fff" stroke-width="4">
            <polyline points="400,1470 430,1415 500,1395 560,1370 600,1365 670,1325 700,1335 760,1360 800,1395 810,1420 840,1420 870,1400 930,1395 985,1400 1000,1375 1050,1340 1090,1305 1110,1300 1150,1260 1170,1235"/>
            <polyline points="1245,1240 1270,1265 1285,1265"/>
            <polyline points="1305,1270 1360,1305 1415,1305 1450,1250 1490,1170 1530,1135"/>
            <polyline points="1090,1285 1095,1305"/>
            <polyline points="750,960 768,985"/>
            <polyline points="680,1005 705,1020"/>
          </g>
        </g>
        <polygon filter="url(#jag2)" shape-rendering="crispEdges" fill="#000" points="500,40 470,42 445,50 420,48 400,62 375,70 355,85 330,90 310,105 295,125 270,135 250,165 225,180 205,205 200,232 175,250 150,285 165,320 150,345 160,385 150,415 170,440 195,470 215,500 240,525 255,575 290,600 320,625 370,645 410,685 460,690 495,680 520,692 590,680 640,650 680,630 720,610 755,575 765,530 805,490 820,430 830,380 825,320 850,295 880,270 1000,21 520,21"/>
        <path fill="#000" d="M530 738h12v12h-12z"/>
      </svg>
    </section>
  </main>

  <footer class="status">
    <label class="loc"><svg class="lsi"><use href="#search"/></svg><span>Type to locate (Ctrl+K)</span></label>
    <span class="fill"></span>
    <span class="sl sl-co">Coordinate</span>
    <span class="inp coord">452349 4529275</span>
    <svg class="sti wz"><use href="#wiz"/></svg>
    <span class="sl sl-sc">Scale</span>
    <span class="inp scale"><span class="gr">1:267224</span><span class="cbtn"><i class="ar dk small"></i></span></span>
    <svg class="sti lk"><use href="#lock"/></svg>
    <span class="sl sl-ma">Magnifier</span>
    <span class="inp mag"><span class="gr">100%</span><span class="spin"><i class="su"></i><i class="sd"></i></span></span>
    <span class="sl sl-ro">Rotation</span>
    <span class="inp rot"><span class="gr">0,0 °</span><span class="spin"><i class="su"></i><i class="sd"></i></span></span>
    <i class="cb ck st">✓</i>
    <span class="sl sl-re">Render</span>
    <svg class="sti gl"><use href="#sglobe"/></svg>
    <span class="sl sl-ep">EPSG:32633</span>
    <svg class="sti ms"><use href="#msg"/></svg>
  </footer>
</div>

<div class="menu m1">
  <div class="mr"><svg class="mic"><use href="#rcalc"/></svg>Raster Calculator...</div>
  <div class="mr">Align Rasters...</div>
  <div class="mr sub">Analysis</div>
  <div class="mr sub">Projections</div>
  <div class="mr sub">Miscellaneous</div>
  <div class="mr sub">Extraction</div>
  <div class="mr sub hi">Conversion</div>
</div>
<div class="menu m2">
  <div class="mr"><svg class="mic w"><use href="#pct"/></svg>PCT to RGB...</div>
  <div class="mr hi red"><svg class="mic w"><use href="#poly"/></svg>Polygonize (Raster to Vector)...</div>
  <div class="mr"><svg class="mic w"><use href="#rasz"/></svg>Rasterize (Vector to Raster)...</div>
  <div class="mr"><svg class="mic w"><use href="#rgbp"/></svg>RGB to PCT...</div>
  <div class="mr"><svg class="mic w"><use href="#trans"/></svg>Translate (Convert Format)...</div>
</div>
</body>
</html>
```

FILE: styles.css
```css
* { box-sizing: border-box; }
html, body { margin: 0; padding: 0; height: 100%; overflow: hidden; }
body { font: 11.7px Roboto, "Noto Sans", sans-serif; color: #000; background: #f0f0f0; position: relative; }
.defs { position: absolute; width: 0; height: 0; overflow: hidden; }
.app { display: flex; flex-direction: column; height: 726px; }
.st { font: 12px "Liberation Sans", sans-serif; fill: #555; }
.it { font: italic bold 15px "Liberation Serif", serif; fill: #fff; }
.lt { font: bold 7.500px "Liberation Sans", sans-serif; fill: #222; }
.lt.gy { fill: #bbb; }
.lt.rd { fill: #e8232a; }
.hq { font: 15px "Liberation Sans", sans-serif; fill: #fff; }
.tt { font: 20px "Liberation Serif", serif; fill: #222; }
.eps { font: 16px "Liberation Serif", serif; fill: #ccc; }

.titlebar { height: 23px; background: #fff; display: flex; align-items: center; flex: none; padding-right: 2px; }
.qlogo { width: 16px; height: 16px; margin-left: 3px; }
.title { margin-left: 4px; font-size: 13.7px; }
.fill { flex: 1; }
.win { width: 46px; height: 23px; display: flex; align-items: center; justify-content: center; }
.wi { width: 10px; height: 10px; }

.menubar { height: 20px; display: flex; flex: none; padding-left: 3px; background: #f5f5f5; }
.mi { padding: 0 7px; line-height: 20px; white-space: nowrap; }
.mi.on { background: #0078d7; color: #fff; padding: 0 0 0 3px; margin: 0 5px 0 3px; width: 38px; }

.tb { height: 39px; flex: none; display: flex; align-items: center; border-top: 1px solid #fff; border-bottom: 1px solid #b4b4b4; background: linear-gradient(#f5f5f5, #eeeeee); overflow: hidden; padding-left: 4px; }
.hd { width: 9.500px; height: 22px; flex: none; display: flex; justify-content: center; }
.hd::before { content: ""; width: 6px; height: 22px; background: radial-gradient(circle, #a8a8a8 .7px, transparent 1.100px) 0 0/3px 3px; }
.hd.h7 { width: 7.500px; }
.hd.h13 { width: 13px; }
.hd.h15 { width: 15px; }
.hd.h16 { width: 16px; }
.hd.h17 { width: 17px; }
.b { width: 33px; height: 30px; display: flex; align-items: center; justify-content: center; flex: none; position: relative; }
.b.act { background: #dfdfdf; border: 1px solid #b8b8b8; border-radius: 2px; }
.b.tight { margin-left: -3px; }
.b.pd::after { content: ""; position: absolute; left: 22px; top: 24px; border: 3px solid transparent; border-bottom: 0; border-top: 4px solid #b5b5b5; }
.ic { width: 24px; height: 24px; display: block; }
.under1 { width: 198px; flex: none; }
.under2 { width: 178px; flex: none; }
.under4 { width: 176px; flex: none; }
.gap1 { width: 1px; flex: none; }
.gap2 { width: 2px; flex: none; }
.gap3 { width: 3px; flex: none; }
.ar { width: 11px; height: 8px; flex: none; position: relative; }
.ar::after { content: ""; position: absolute; left: 1.500px; top: 2px; border: 4px solid transparent; border-bottom: 0; border-top: 5px solid #9c9c9c; }
.ar.dk::after { border-top-color: #444; }
.ar.lt9 { width: 9px; }
.ar.lt9::after { left: .500px; }
.ar.small { width: 8px; margin: 0 6px 0 -4px; }
.ar.small::after { left: 0; border-width: 3px; border-bottom: 0; border-top-width: 4px; }
.sep { flex: none; height: 26px; position: relative; }
.sep::after { content: ""; position: absolute; left: 50%; top: 0; bottom: 0; width: 1px; background: #cfcfcf; }
.s5 { width: 5px; }
.s7 { width: 7px; }
.s9 { width: 9px; }
.tbox { width: 22px; height: 22px; flex: none; display: flex; align-items: center; justify-content: center; background: #e4eaf0; border: 1px solid #a9a9a9; margin: -8px 1px 0 3px; }
.tbox .ic { width: 20px; height: 20px; }

.main { flex: 1; display: flex; min-height: 0; }
.side { width: 355px; flex: none; display: flex; flex-direction: column; background: #f0f0f0; }
.dock { display: flex; flex-direction: column; }
.d1 { height: 207px; }
.d2 { flex: 1; min-height: 0; padding-top: 5px; }
.dh { height: 21px; display: flex; align-items: center; justify-content: space-between; padding: 0 8px 2px 4px; flex: none; }
.dbtns { display: flex; gap: 3px; }
.dbt { width: 11px; height: 11px; }
.dt { height: 29px; display: flex; align-items: center; padding: 0 0 4px 7px; flex: none; }
.di { width: 18px; height: 18px; margin-right: 7px; flex: none; }
.di.eps1 { margin: 0 3px 0 5px; opacity: .9; }

.tree { width: 349px; margin-left: 1px; border: 1px solid #a0a0a0; background: #fff; display: flex; min-height: 0; flex: none; }
.br { height: 156px; }
.lay { height: 238px; }
.rows { flex: 1; overflow: hidden; min-width: 0; }
.r { height: 18px; display: flex; align-items: center; white-space: nowrap; position: relative; }
.br .rows { padding-top: 1px; }
.tw { width: 18px; flex: none; position: relative; height: 18px; }
.tw.c::after { content: ""; position: absolute; left: 6px; top: 4.500px; border: 4px solid transparent; border-right: 0; border-left: 5px solid #555; }
.tw.o::after { content: ""; position: absolute; left: 4px; top: 6px; border: 4px solid transparent; border-bottom: 0; border-top: 5px solid #555; }
.ri { width: 18px; height: 18px; margin-right: 4px; flex: none; }
.vs { width: 15px; flex: none; border-left: 1px solid #d9d9d9; display: flex; flex-direction: column; background: #f0f0f0; }
.sb { height: 14px; flex: none; position: relative; background: #f0f0f0; }
.sb.up::after { content: ""; position: absolute; left: 3px; top: 5px; border: 4px solid transparent; border-top: 0; border-bottom: 4px solid #444; }
.sb.dn::after { content: ""; position: absolute; left: 3px; top: 5px; border: 4px solid transparent; border-bottom: 0; border-top: 4px solid #444; }
.tk { flex: 1; background: #fff; }
.vs1 .th { height: 66px; background: #e0e0e0; }
.vs2 .th { height: 36px; background: #e0e0e0; }
.cn { height: 14px; flex: none; background: #f0f0f0; border-top: 1px solid #d9d9d9; }
.split { height: 0; position: relative; }
.split::after { content: ""; position: absolute; left: 168px; top: 1px; width: 16px; height: 2px; background: radial-gradient(circle, #aaa .7px, transparent 1px) 0 0/3px 2px; }

.lmain { flex: 1; display: flex; flex-direction: column; min-width: 0; }
.cb { width: 14px; height: 14px; flex: none; border: 1px solid #adadad; background: #fff; margin: 0 8px 0 4px; display: block; font: bold 13px/12px "DejaVu Sans", sans-serif; text-align: center; color: #000; }
.rs { width: 13px; height: 13px; flex: none; margin-right: 7px; }
.dash { width: 16px; height: 2px; background: #c4c4c4; margin: 0 6px 0 -2px; flex: none; }
.nm { font-weight: 700; font-size: 12.1px; }
.off .nm { font-style: italic; font-size: 12.5px; color: #7d7d7d; }
.sel { background: #1a80d8; color: #fff; }
.sel .nm { text-decoration: underline; }
.band { padding-left: 43px; height: 17px; line-height: 15px; padding-top: 1px; }
.ramp { display: flex; padding-left: 43px; }
.grad { width: 16px; height: 96px; background: linear-gradient(#f8f8f8, #000); flex: none; }
.lbs { display: flex; flex-direction: column; justify-content: space-between; height: 96px; padding: 0 0 0 5px; line-height: 14px; }
.hs { height: 14px; flex: none; display: flex; border-top: 1px solid #d9d9d9; background: #f0f0f0; margin-top: auto; }
.hb { width: 14px; position: relative; flex: none; }
.hm { flex: 1; background: #f0f0f0; border-right: 1px solid #bbb; }
.hb.lf::after { content: ""; position: absolute; left: 4px; top: 2px; border: 4px solid transparent; border-left: 0; border-right: 4px solid #444; }
.hb.rt::after { content: ""; position: absolute; left: 5px; top: 2px; border: 4px solid transparent; border-right: 0; border-left: 4px solid #444; }

.canvas { flex: 1; background: #fff; border-left: 1px solid #a8a8a8; border-bottom: 1px solid #a8a8a8; position: relative; min-width: 0; }
.raster { position: absolute; left: 6px; top: 13px; width: 499px; height: 477px; display: block; }

.status { height: 26px; flex: none; display: flex; align-items: center; padding: 2px 4px 0 5px; font-size: 10.6px; }
.loc { width: 198px; height: 20px; border: 1px solid #adadad; border-radius: 2px; background: #fff; display: flex; align-items: center; color: #7d7d7d; padding-left: 8px; font-size: 11px; }
.lsi { width: 13px; height: 13px; margin-right: 5px; flex: none; }
.sl { flex: none; white-space: nowrap; }
.inp { height: 20px; border: 1px solid #adadad; border-radius: 2px; background: #fff; display: flex; align-items: center; flex: none; }
.sl-co { width: 57px; }
.coord { width: 95px; padding-left: 6px; white-space: nowrap; }
.sti { flex: none; }
.wz { width: 16px; height: 16px; margin-left: 6px; }
.sl-sc { width: 30px; margin-left: 10px; }
.scale { width: 80px; padding-left: 1px; }
.gr { flex: 1; padding-left: 3px; }
.cbtn { width: 21px; align-self: stretch; display: flex; align-items: center; justify-content: center; border-left: 1px solid #d0d0d0; }
.cbtn .ar.small { margin: 0; }
.lk { width: 14px; height: 18px; margin-left: 11px; }
.sl-ma { width: 48px; margin-left: 8px; }
.mag { width: 83px; }
.sl-ro { width: 52px; margin-left: 8px; }
.rot { width: 83px; }
.spin { width: 13px; align-self: stretch; display: flex; flex-direction: column; justify-content: center; gap: 2px; align-items: center; border-left: 1px solid #d0d0d0; }
.su { border: 3.500px solid transparent; border-top: 0; border-bottom: 4px solid #555; }
.sd { border: 3.500px solid transparent; border-bottom: 0; border-top: 4px solid #555; }
.cb.st { margin: 0 0 0 7px; }
.sl-re { width: 51px; margin-left: 4px; }
.gl { width: 15px; height: 15px; }
.sl-ep { width: 83px; margin-left: 2px; }
.ms { width: 18px; height: 18px; }

.menu { position: absolute; background: #fff; border: 1px solid #a0a0a0; box-shadow: 2px 2px 3px rgba(0,0,0,.25); }
.m1 { left: 329px; top: 43px; width: 194px; height: 161px; }
.m2 { left: 522px; top: 181px; width: 257px; height: 115px; }
.mr { height: 23px; line-height: 22px; padding-left: 26px; position: relative; white-space: nowrap; }
.mic { position: absolute; left: 5px; top: 3px; width: 16px; height: 16px; }
.mic.w { left: 4px; width: 18px; height: 18px; top: 2px; }
.m2 .mr { padding-left: 27px; }
.sub::after { content: ""; position: absolute; right: 4px; top: 7px; border: 4px solid transparent; border-right: 0; border-left: 4px solid #444; }
.hi { background: #0078d7; color: #fff; }
.sub.hi::after { border-left-color: #cfe4f7; }
.hi.red { outline: 2px solid #e81123; outline-offset: -2px; }
```
